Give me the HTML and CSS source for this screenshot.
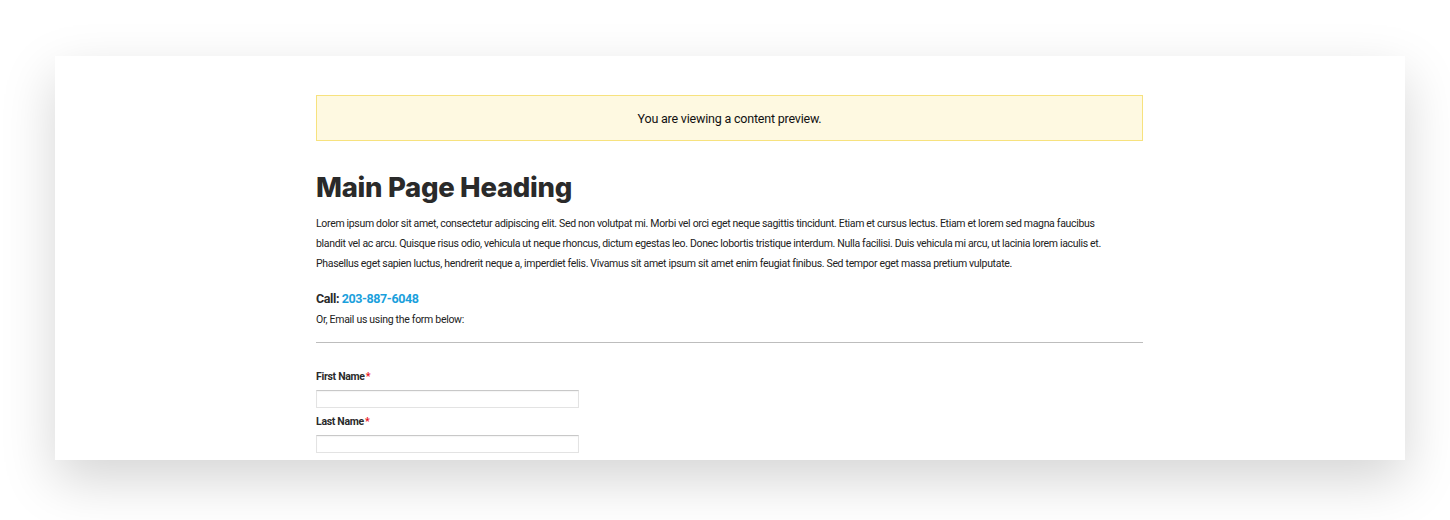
FILE: index.html
```html
<!DOCTYPE html>
<html lang="en">
<head>
<meta charset="utf-8">
<title>Content preview</title>
<link rel="stylesheet" href="styles.css">
</head>
<body>
<div class="card">
  <div class="content">
    <div class="notice">You are viewing a content preview.</div>
    <h1 class="heading">Main Page Heading</h1>
    <p class="lead">Lorem ipsum dolor sit amet, consectetur adipiscing elit. Sed non volutpat mi. Morbi vel orci eget neque sagittis tincidunt. Etiam et cursus lectus. Etiam et lorem sed magna faucibus<br>blandit vel ac arcu. Quisque risus odio, vehicula ut neque rhoncus, dictum egestas leo. Donec lobortis tristique interdum. Nulla facilisi. Duis vehicula mi arcu, ut lacinia lorem iaculis et.<br>Phasellus eget sapien luctus, hendrerit neque a, imperdiet felis. Vivamus sit amet ipsum sit amet enim feugiat finibus. Sed tempor eget massa pretium vulputate.</p>
    <p class="call">Call: <a class="phone" href="#">203-887-6048</a></p>
    <p class="note">Or, Email us using the form below:</p>
    <hr class="rule">
    <form class="form">
      <label class="label">First Name<span class="req">*</span></label>
      <input class="field" type="text">
      <label class="label">Last Name<span class="req">*</span></label>
      <input class="field" type="text">
    </form>
  </div>
</div>
</body>
</html>
```

FILE: styles.css
```css
html, body {
  margin: 0;
  background: #ffffff;
}
body {
  box-sizing: border-box;
  min-height: 520px;
  padding: 56px 45px 0 55px;
  font-family: Roboto, "Liberation Sans", sans-serif;
  color: #222;
}
.card {
  width: 1350px;
  height: 404px;
  background: #fff;
  box-shadow: 0 20px 50px rgba(0, 0, 0, 0.17);
  overflow: hidden;
}
.content {
  width: 827px;
  margin: 0 0 0 261px;
  padding-top: 39px;
}
.notice {
  height: 44px;
  border: 1px solid #f7e27e;
  background: #fef9e1;
  display: flex;
  align-items: center;
  justify-content: center;
  font-size: 12.5px;
  letter-spacing: -0.2px;
  color: #111;
}
.heading {
  margin: 28px 0 0;
  font-family: Inter, sans-serif;
  font-weight: 800;
  font-size: 27.5px;
  line-height: 36px;
  letter-spacing: -0.3px;
  color: #2a2a2a;
}
.lead {
  margin: 9px 0 0;
  font-size: 10.5px;
  line-height: 20px;
  letter-spacing: -0.32px;
  color: #222;
  white-space: nowrap;
}
.call {
  margin: 17px 0 0;
  font-size: 12.5px;
  font-weight: 700;
  line-height: 16px;
  letter-spacing: -0.4px;
  color: #2a2a2a;
}
.phone {
  color: #1aa0dc;
  text-decoration: none;
}
.note {
  margin: 5px 0 0;
  font-size: 10.5px;
  line-height: 16px;
  letter-spacing: -0.3px;
  color: #222;
}
.rule {
  margin: 14px 0 0;
  border: 0;
  border-top: 1px solid #bdbdbd;
  height: 0;
}
.form {
  display: flex;
  flex-direction: column;
  align-items: flex-start;
  padding-top: 27px;
}
.label {
  font-size: 10.5px;
  font-weight: 700;
  line-height: 14px;
  letter-spacing: -0.3px;
  color: #2a2a2a;
}
.req {
  color: #e8141b;
  margin-left: 1px;
}
.field {
  box-sizing: border-box;
  width: 263px;
  height: 18px;
  margin: 6px 0 7px;
  padding: 0;
  border: 1px solid #e3e3e3;
  border-top-color: #c8c8c8;
  background: #fff;
  box-shadow: inset 0 1px 1px rgba(0, 0, 0, 0.04);
}
```
